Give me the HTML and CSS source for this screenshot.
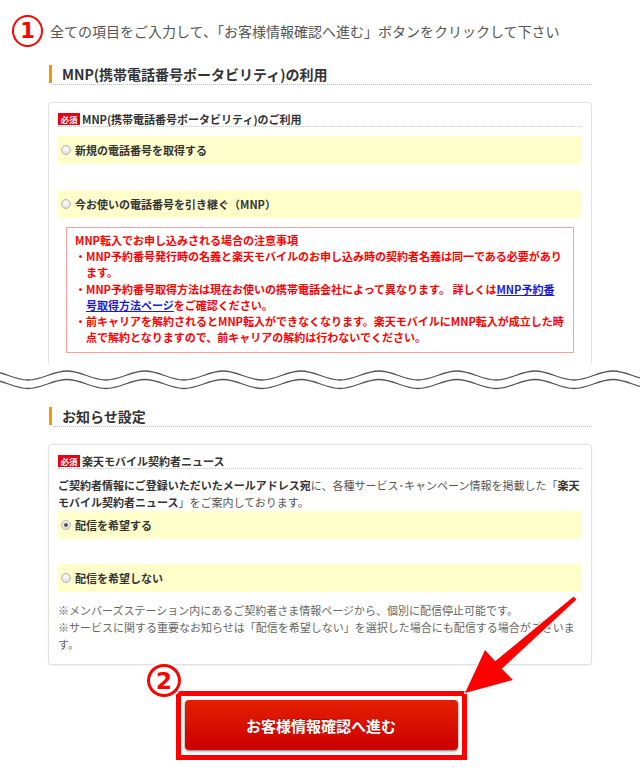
FILE: index.html
```html
<!DOCTYPE html>
<html lang="ja">
<head>
<meta charset="utf-8">
<title>MNP / お知らせ設定</title>
<link rel="stylesheet" href="styles.css">
</head>
<body>
<div class="page">
  <div class="intro">
    <span class="num num1">1</span>
    <p class="intro-text">全ての項目をご入力して、「お客様情報確認へ進む」ボタンをクリックして下さい</p>
  </div>

  <section class="sec">
    <div class="sec-head"><h2 class="sec-title">MNP(携帯電話番号ポータビリティ)の利用</h2></div>
    <div class="card card-cut">
      <div class="field-label"><span class="req">必須</span>MNP(携帯電話番号ポータビリティ)のご利用</div>
      <label class="opt"><span class="radio"></span>新規の電話番号を取得する</label>
      <label class="opt opt-gap"><span class="radio"></span>今お使いの電話番号を引き継ぐ（MNP）</label>
      <div class="warn">
        <p>MNP転入でお申し込みされる場合の注意事項</p>
        <p class="warn-item">・MNP予約番号発行時の名義と楽天モバイルのお申し込み時の契約者名義は同一である必要があり<br>ます。</p>
        <p class="warn-item">・MNP予約番号取得方法は現在お使いの携帯電話会社によって異なります。 詳しくは<a class="link" href="#">MNP予約番<br>号取得方法ページ</a>をご確認ください。</p>
        <p class="warn-item">・前キャリアを解約されるとMNP転入ができなくなります。楽天モバイルにMNP転入が成立した時<br>点で解約となりますので、前キャリアの解約は行わないでください。</p>
      </div>
    </div>
  </section>

  <svg class="wave" width="640" height="32" viewBox="0 0 640 32" aria-hidden="true">
    <g fill="none" stroke="#555" stroke-width="1.3">
      <path id="wv" d="M-11 7 C3.2 7 13.8 16 28 16 S52.8 7 67 7 S91.8 16 106 16 S130.8 7 145 7 S169.8 16 184 16 S208.8 7 223 7 S247.8 16 262 16 S286.8 7 301 7 S325.8 16 340 16 S364.8 7 379 7 S403.8 16 418 16 S442.8 7 457 7 S481.8 16 496 16 S520.8 7 535 7 S559.8 16 574 16 S598.8 7 613 7 S637.8 16 652 16"/>
      <use href="#wv" transform="translate(0 8.5)"/>
    </g>
  </svg>

  <section class="sec sec2">
    <div class="sec-head"><h2 class="sec-title">お知らせ設定</h2></div>
    <div class="card">
      <div class="field-label"><span class="req">必須</span>楽天モバイル契約者ニュース</div>
      <p class="desc"><b>ご契約者情報にご登録いただいたメールアドレス宛</b>に、各種サービス･キャンペーン情報を掲載した「<b>楽天<br>モバイル契約者ニュース</b>」をご案内しております。</p>
      <label class="opt opt-first"><span class="radio on"></span>配信を希望する</label>
      <label class="opt opt-gap2"><span class="radio"></span>配信を希望しない</label>
      <p class="note">※メンバーズステーション内にあるご契約者さま情報ページから、個別に配信停止可能です。<br>※サービスに関する重要なお知らせは「配信を希望しない」を選択した場合にも配信する場合がございま<br>す。</p>
    </div>
  </section>

  <div class="submit-area">
    <span class="num num2">2</span>
    <div class="submit-frame">
      <button class="submit" type="button">お客様情報確認へ進む</button>
    </div>
  </div>

  <svg class="arrow" width="640" height="780" viewBox="0 0 640 780" aria-hidden="true">
    <polygon points="465,693 485,650 495.2,661.2 573.7,596.5 576.4,599.4 501.8,668.8 513,680" fill="#ff0000" stroke="#ffffff" stroke-width="2" stroke-linejoin="round" paint-order="stroke"/>
  </svg>
</div>
</body>
</html>
```

FILE: styles.css
```css
body {
  margin: 0;
  background: #fff;
  font-family: "Noto Sans CJK JP", "Noto Sans", sans-serif;
  color: #333;
}

.page {
  position: relative;
  width: 640px;
  height: 780px;
  overflow: hidden;
}

/* circled step numbers */
.num {
  box-sizing: border-box;
  display: flex;
  align-items: center;
  justify-content: center;
  border-radius: 50%;
  color: #f00;
  font-family: "DejaVu Sans", sans-serif;
  font-weight: 700;
}

.num1 {
  width: 31px;
  height: 32px;
  border: 2px solid #f00;
  font-size: 21px;
  flex: none;
}

.intro {
  display: flex;
  align-items: center;
  gap: 7px;
  padding: 15px 0 0 12px;
}

.intro-text {
  margin: 0;
  font-size: 14px;
  line-height: 20px;
  color: #555;
}

/* sections */
.sec {
  margin: 0 48px;
}

.sec-head {
  margin: 18px 0 0 5px;
  border-bottom: 1px dotted #bdbdbd;
}

.sec2 .sec-head {
  margin-top: 11px;
}

.sec-title {
  margin: 0 0 1px -4px;
  padding-left: 10px;
  border-left: 3px solid #f39800;
  font-size: 14px;
  line-height: 18px;
  font-weight: 700;
  color: #333;
}

.card {
  margin-top: 17px;
  border: 1px solid #e2e2e2;
  border-radius: 4px;
  padding: 9px 9px 11px;
  box-shadow: 0 1px 2px rgba(0, 0, 0, 0.06);
}

.card-cut {
  border-bottom: none;
  border-radius: 4px 4px 0 0;
  box-shadow: none;
  padding-bottom: 11px;
}

.field-label {
  display: flex;
  align-items: center;
  font-size: 11px;
  font-weight: 700;
  line-height: 14px;
  border-bottom: 1px dotted #c8c8c8;
  color: #333;
}

.req {
  width: 22px;
  height: 12px;
  margin-right: 2px;
  background: #e60012;
  color: #fff;
  font-size: 8.5px;
  line-height: 12px;
  text-align: center;
}

.opt {
  display: flex;
  align-items: center;
  gap: 4px;
  height: 28px;
  margin-top: 9px;
  padding-left: 3px;
  background: #ffffcc;
  font-size: 11px;
  font-weight: 700;
  color: #333;
}

.opt-gap {
  margin-top: 26px;
}

.opt-first {
  margin-top: 0;
}

.opt-gap2 {
  margin-top: 25px;
}

.radio {
  position: relative;
  box-sizing: border-box;
  width: 10px;
  height: 10px;
  border-radius: 50%;
  border: 1px solid #b8b8b8;
  background: radial-gradient(circle at 50% 35%, #ffffff, #d2d2d2);
}

.radio.on::after {
  content: "";
  position: absolute;
  left: 2px;
  top: 2px;
  width: 4px;
  height: 4px;
  border-radius: 50%;
  background: #555;
}

.warn {
  margin: 9px 8px 0;
  padding: 4px 8px 7px;
  border: 1px solid #ff9c9c;
  color: #f00;
  font-size: 11px;
  font-weight: 700;
  line-height: 16.2px;
}

.warn p {
  margin: 0;
  white-space: nowrap;
}

.warn .warn-item {
  padding-left: 11px;
  text-indent: -11px;
}

.link {
  color: #1a1ad8;
  text-decoration: underline;
}

.wave {
  display: block;
}

.desc {
  margin: 8px 0 0;
  font-size: 11px;
  line-height: 17px;
  color: #555;
  white-space: nowrap;
}

.desc b {
  color: #333;
}

.note {
  margin: 10px 0 0;
  font-size: 11px;
  line-height: 17px;
  color: #666;
  white-space: nowrap;
}

/* submit */
.submit-area {
  position: relative;
  display: flex;
  justify-content: center;
  margin-top: 26px;
}

.num2 {
  position: absolute;
  left: 147px;
  top: -27px;
  width: 34px;
  height: 33px;
  border: 3px solid #f00;
  background: transparent;
  font-size: 23px;
  box-shadow: 0 0 0 2px #fff, inset 0 0 0 1px #fff;
  text-shadow: 0 0 2px #fff;
}

.submit-frame {
  border: 5px solid #f00;
  padding: 4px 4px 5px;
  margin-left: 2px;
}

.submit {
  display: block;
  width: 273px;
  height: 50px;
  border: none;
  border-radius: 4px;
  background: linear-gradient(#e41f00, #cc0000);
  box-shadow: 0 1px 3px rgba(0, 0, 0, 0.55);
  color: #fff;
  font-family: inherit;
  font-size: 15px;
  font-weight: 700;
  text-shadow: 0 -1px 0 rgba(0, 0, 0, 0.25);
}

.arrow {
  position: absolute;
  left: 0;
  top: 0;
  pointer-events: none;
}
```
